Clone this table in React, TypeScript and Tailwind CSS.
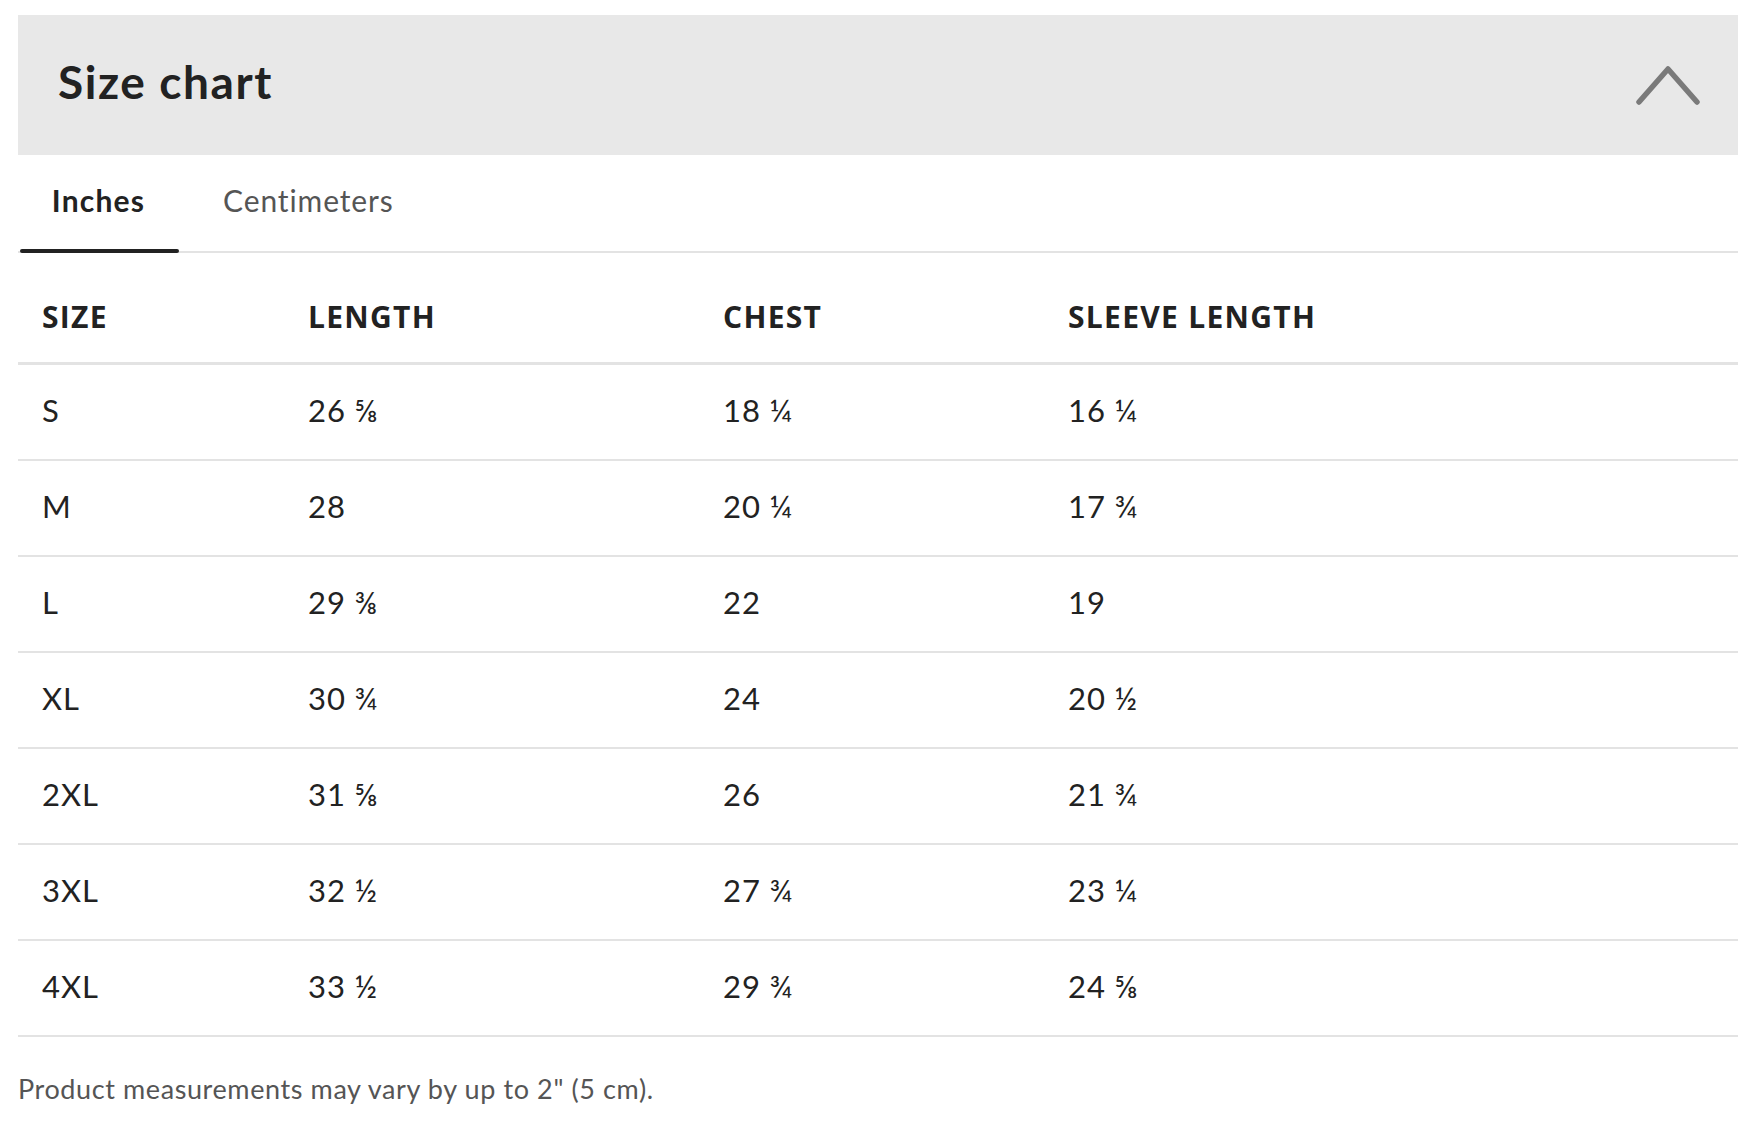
import { useState } from "react";

const rows = [
  { size: "S", length: "26 ⅝", chest: "18 ¼", sleeve: "16 ¼" },
  { size: "M", length: "28", chest: "20 ¼", sleeve: "17 ¾" },
  { size: "L", length: "29 ⅜", chest: "22", sleeve: "19" },
  { size: "XL", length: "30 ¾", chest: "24", sleeve: "20 ½" },
  { size: "2XL", length: "31 ⅝", chest: "26", sleeve: "21 ¾" },
  { size: "3XL", length: "32 ½", chest: "27 ¾", sleeve: "23 ¼" },
  { size: "4XL", length: "33 ½", chest: "29 ¾", sleeve: "24 ⅝" },
];

const cols = "grid grid-cols-[266px_415px_345px_1fr]";

export default function App() {
  const [tab, setTab] = useState<"in" | "cm">("in");

  return (
    <div className="min-h-screen bg-white pt-[15px] pl-[18px] pr-[16px] font-['Lato','Liberation_Sans',sans-serif] text-[#222]">
      {/* Accordion header */}
      <div className="flex h-[140px] items-center justify-between bg-[#e8e8e8] pl-[40px] pr-[38px]">
        <h2 className="pb-[6px] text-[46px] font-bold leading-none tracking-[1.6px]">Size chart</h2>
        <svg width="64" height="42" viewBox="0 0 64 42" fill="none">
          <path d="M3 38 L32 5 L61 38" stroke="#7a7a7a" strokeWidth="5.5" strokeLinecap="round" strokeLinejoin="round" />
        </svg>
      </div>

      {/* Tabs */}
      <div className="flex h-[98px] items-end border-b-2 border-[#e3e3e3]">
        <button
          onClick={() => setTab("in")}
          className={`relative flex h-full w-[161px] items-center justify-center pb-[6px] text-[30px] tracking-[1.2px] ${tab === "in" ? "font-bold text-[#222]" : "text-[#555]"}`}
        >
          Inches
          {tab === "in" && <span className="absolute -bottom-[2px] left-[2px] right-0 h-[4px] rounded-full bg-[#222]" />}
        </button>
        <button
          onClick={() => setTab("cm")}
          className={`relative flex h-full items-center pl-[44px] pr-[34px] pb-[6px] text-[30px] tracking-[0.9px] ${tab === "cm" ? "font-bold text-[#222]" : "text-[#555]"}`}
        >
          Centimeters
        </button>
      </div>

      {/* Table */}
      <div className={`${cols} h-[112px] items-center border-b-[3px] border-[#e3e3e3] font-['Open_Sans',sans-serif] text-[30px] font-bold tracking-[1.3px] text-[#222]`}>
        <div className="pl-[24px] pt-[18px]">SIZE</div>
        <div className="pl-[24px] pt-[18px]">LENGTH</div>
        <div className="pl-[24px] pt-[18px]">CHEST</div>
        <div className="pl-[24px] pt-[18px]">SLEEVE LENGTH</div>
      </div>
      {rows.map((r) => (
        <div key={r.size} className={`${cols} h-[96px] items-center border-b-2 border-[#e3e3e3] text-[31px] tracking-[0.9px] text-[#222]`}>
          <div className="pb-[4px] pl-[24px]">{r.size}</div>
          <div className="pb-[4px] pl-[24px]">{r.length}</div>
          <div className="pb-[4px] pl-[24px]">{r.chest}</div>
          <div className="pb-[4px] pl-[24px]">{r.sleeve}</div>
        </div>
      ))}

      <p className="pt-[32px] text-[27px] tracking-[0.6px] text-[#555]">Product measurements may vary by up to 2" (5 cm).</p>
    </div>
  );
}
